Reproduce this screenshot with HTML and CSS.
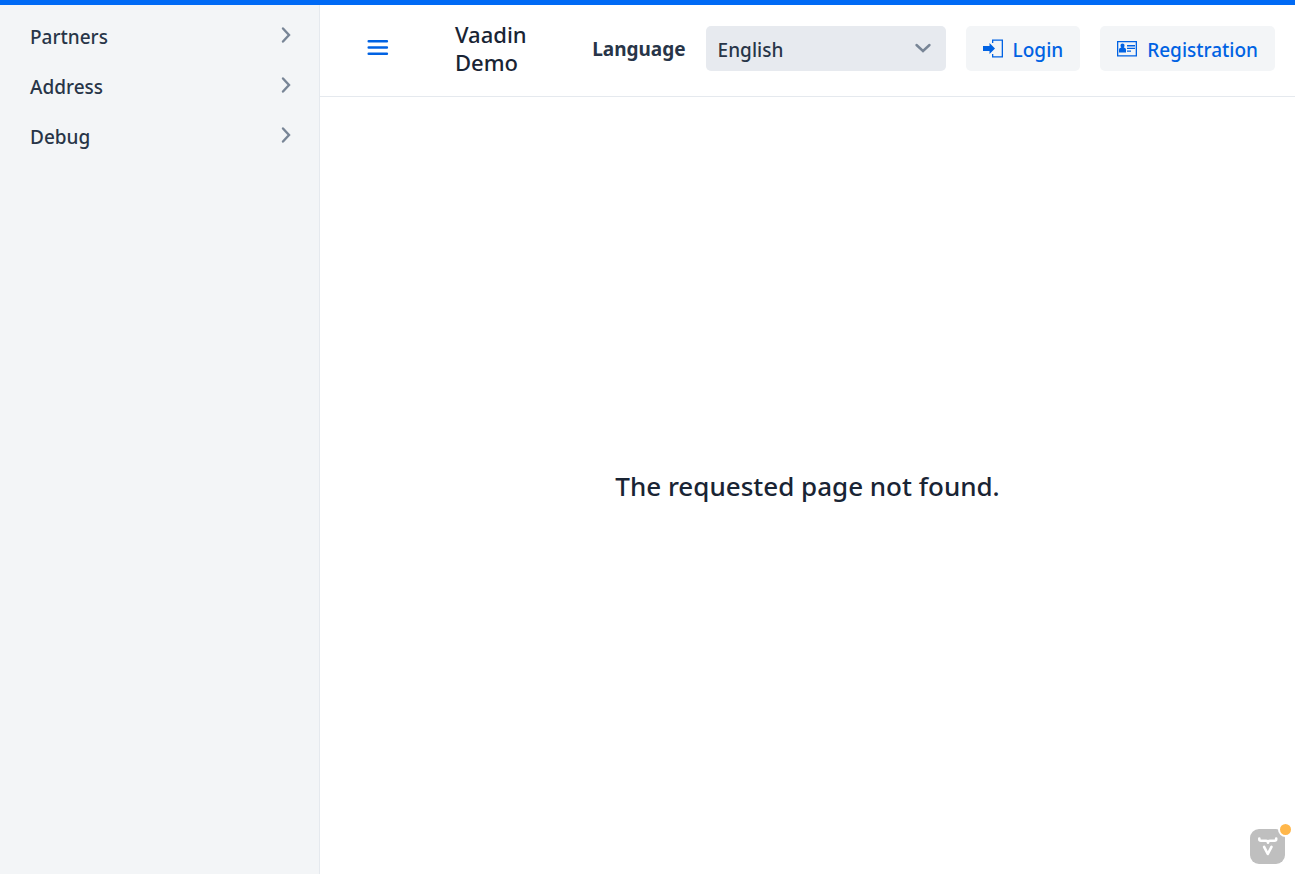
FILE: index.html
```html
<!DOCTYPE html>
<html lang="en">
<head>
<meta charset="utf-8">
<meta name="viewport" content="width=device-width, initial-scale=1">
<title>Vaadin Demo</title>
<link rel="stylesheet" href="styles.css">
</head>
<body>
<div class="progress"></div>
<div class="app">
  <nav class="drawer" aria-label="Main">
    <button class="drawer-item" type="button"><span class="drawer-label">Partners</span><svg class="chevron" viewBox="0 0 12 18" aria-hidden="true"><path d="M3 2.500 9 9l-6 6.500"/></svg></button>
    <button class="drawer-item" type="button"><span class="drawer-label">Address</span><svg class="chevron" viewBox="0 0 12 18" aria-hidden="true"><path d="M3 2.500 9 9l-6 6.500"/></svg></button>
    <button class="drawer-item" type="button"><span class="drawer-label">Debug</span><svg class="chevron" viewBox="0 0 12 18" aria-hidden="true"><path d="M3 2.500 9 9l-6 6.500"/></svg></button>
  </nav>
  <div class="content">
    <header class="navbar">
      <button class="toggle" type="button" aria-label="Menu">
        <svg class="toggle-icon" viewBox="0 0 22 18" aria-hidden="true"><path d="M1.700 2.300h18.200M1.700 8.500h18.200M1.700 14.700h18.200"/></svg>
      </button>
      <h1 class="title">Vaadin Demo</h1>
      <label class="language-label" for="language">Language</label>
      <div class="select">
        <select class="select-field" id="language"><option>English</option></select>
        <svg class="select-arrow" viewBox="0 0 18 12" aria-hidden="true"><path d="M2.500 3 9 9l6.500-6"/></svg>
      </div>
      <button class="button" type="button">
        <svg class="icon" viewBox="0 0 20 20" aria-hidden="true"><path d="M0 7h6.500V4l5.500 5.500L6.500 15v-3H0z"/><path d="M9 .5h11v18H9V15h1.300v2.200h8.400V1.800h-8.400V4H9z"/></svg>
        <span class="button-label">Login</span>
      </button>
      <button class="button" type="button">
        <svg class="icon" viewBox="0 0 20 20" aria-hidden="true"><path fill-rule="evenodd" d="M0 2h20v15.500H0zM1.300 3.300v12.900h17.400V3.300z"/><path d="M5.500 4.500c1.300 0 2 .9 2 2.100 0 .9-.3 1.600-.8 2 1.500.2 2.300.9 2.300 2.300v2.600H2v-2.600c0-1.400.9-2.100 2.400-2.300-.6-.4-.9-1.100-.9-2 0-1.200.7-2.100 2-2.100zM10 6h8v1.400h-8zM10 8.700h8v1.400h-8zM10 11.400h4v1.400h-4z"/></svg>
        <span class="button-label">Registration</span>
      </button>
    </header>
    <main class="page">
      <h2 class="message">The requested page not found.</h2>
    </main>
  </div>
</div>
<button class="devtools" type="button" aria-label="Developer tools">
  <svg class="devtools-logo" viewBox="0 0 20 20" aria-hidden="true"><path d="M1.300 1.500v.8Q1.300 3.700 3 3.700H8q2 0 2 2 0-2 2-2H16.500q1.700 0 1.700-1.400V1.500"/><path d="M6.100 9.800 9.800 17l3.700-7.200"/></svg>
  <span class="devtools-dot"></span>
</button>
</body>
</html>
```
FILE: styles.css
```css
* {
  box-sizing: border-box;
}

body {
  margin: 0;
  color: #283548;
  background: #fff;
  font-family: "Segoe UI", "Noto Sans", "Open Sans", sans-serif;
  font-size: 19px;
  font-weight: 500;
  line-height: 24px;
}

button,
select {
  border: 0;
  margin: 0;
  color: inherit;
  font: inherit;
  cursor: pointer;
}

svg {
  display: block;
  flex: none;
}

.progress {
  position: fixed;
  top: 0;
  left: 0;
  right: 0;
  height: 5px;
  background: #006af5;
  z-index: 2;
}

.app {
  display: flex;
  min-height: 100vh;
}

.drawer {
  flex: none;
  width: 320px;
  padding-top: 10px;
  background: #f3f5f7;
  border-right: 1px solid #e5e9ee;
}

.drawer-item {
  display: flex;
  align-items: center;
  justify-content: space-between;
  width: 100%;
  height: 50px;
  padding: 0 27px 0 30px;
  background: none;
}

.drawer-label {
  padding-top: 4px;
}

.chevron {
  width: 12px;
  height: 18px;
}

.chevron,
.select-arrow {
  fill: none;
  stroke: #788596;
  stroke-width: 2.4;
  stroke-linecap: round;
}

.content {
  display: flex;
  flex: 1;
  flex-direction: column;
  min-width: 0;
}

.navbar {
  display: flex;
  align-items: center;
  gap: 20px;
  height: 97px;
  padding: 0 20px;
  border-bottom: 1px solid #e5e9ee;
}

.toggle {
  display: flex;
  align-items: center;
  justify-content: center;
  width: 75px;
  height: 50px;
  padding: 0;
  background: none;
}

.toggle-icon {
  width: 22px;
  height: 18px;
  fill: none;
  stroke: #0062e3;
  stroke-width: 2.5;
  stroke-linecap: round;
}

.title {
  flex: 1;
  margin: 0 20px;
  color: #192434;
  font-size: 22px;
  font-weight: 500;
  line-height: 28px;
}

.language-label {
  padding-top: 2px;
  font-weight: 700;
}

.select {
  position: relative;
  width: 240px;
}

.select-field {
  appearance: none;
  width: 100%;
  height: 45px;
  padding: 4px 40px 0 12px;
  border-radius: 5px;
  background: #e7eaef;
}

.select-arrow {
  position: absolute;
  right: 14px;
  top: 16px;
  width: 18px;
  height: 12px;
  pointer-events: none;
}

.button {
  display: flex;
  align-items: center;
  gap: 10px;
  height: 45px;
  padding: 2px 17px 0;
  border-radius: 5px;
  color: #0062e3;
  background: #f3f5f7;
  white-space: nowrap;
}

.button-label {
  padding-top: 2px;
}

.icon {
  width: 20px;
  height: 20px;
  fill: currentColor;
}

.page {
  display: flex;
  flex: 1;
  align-items: center;
  justify-content: center;
}

.message {
  margin: 0;
  color: #192434;
  font-size: 26px;
  font-weight: 500;
  line-height: 36px;
}

.devtools {
  position: fixed;
  right: 10px;
  bottom: 10px;
  display: grid;
  place-items: center;
  width: 35px;
  height: 35px;
  padding: 0;
  border-radius: 9px;
  background: #bfbfbf;
}

.devtools-logo {
  width: 20px;
  height: 20px;
  fill: none;
  stroke: #fff;
  stroke-width: 2.6;
  stroke-linecap: round;
  stroke-linejoin: round;
}

.devtools-dot {
  position: absolute;
  top: -7px;
  right: -8px;
  width: 15px;
  height: 15px;
  border: 2px solid #fff;
  border-radius: 50%;
  background: #ffb74b;
}
```
